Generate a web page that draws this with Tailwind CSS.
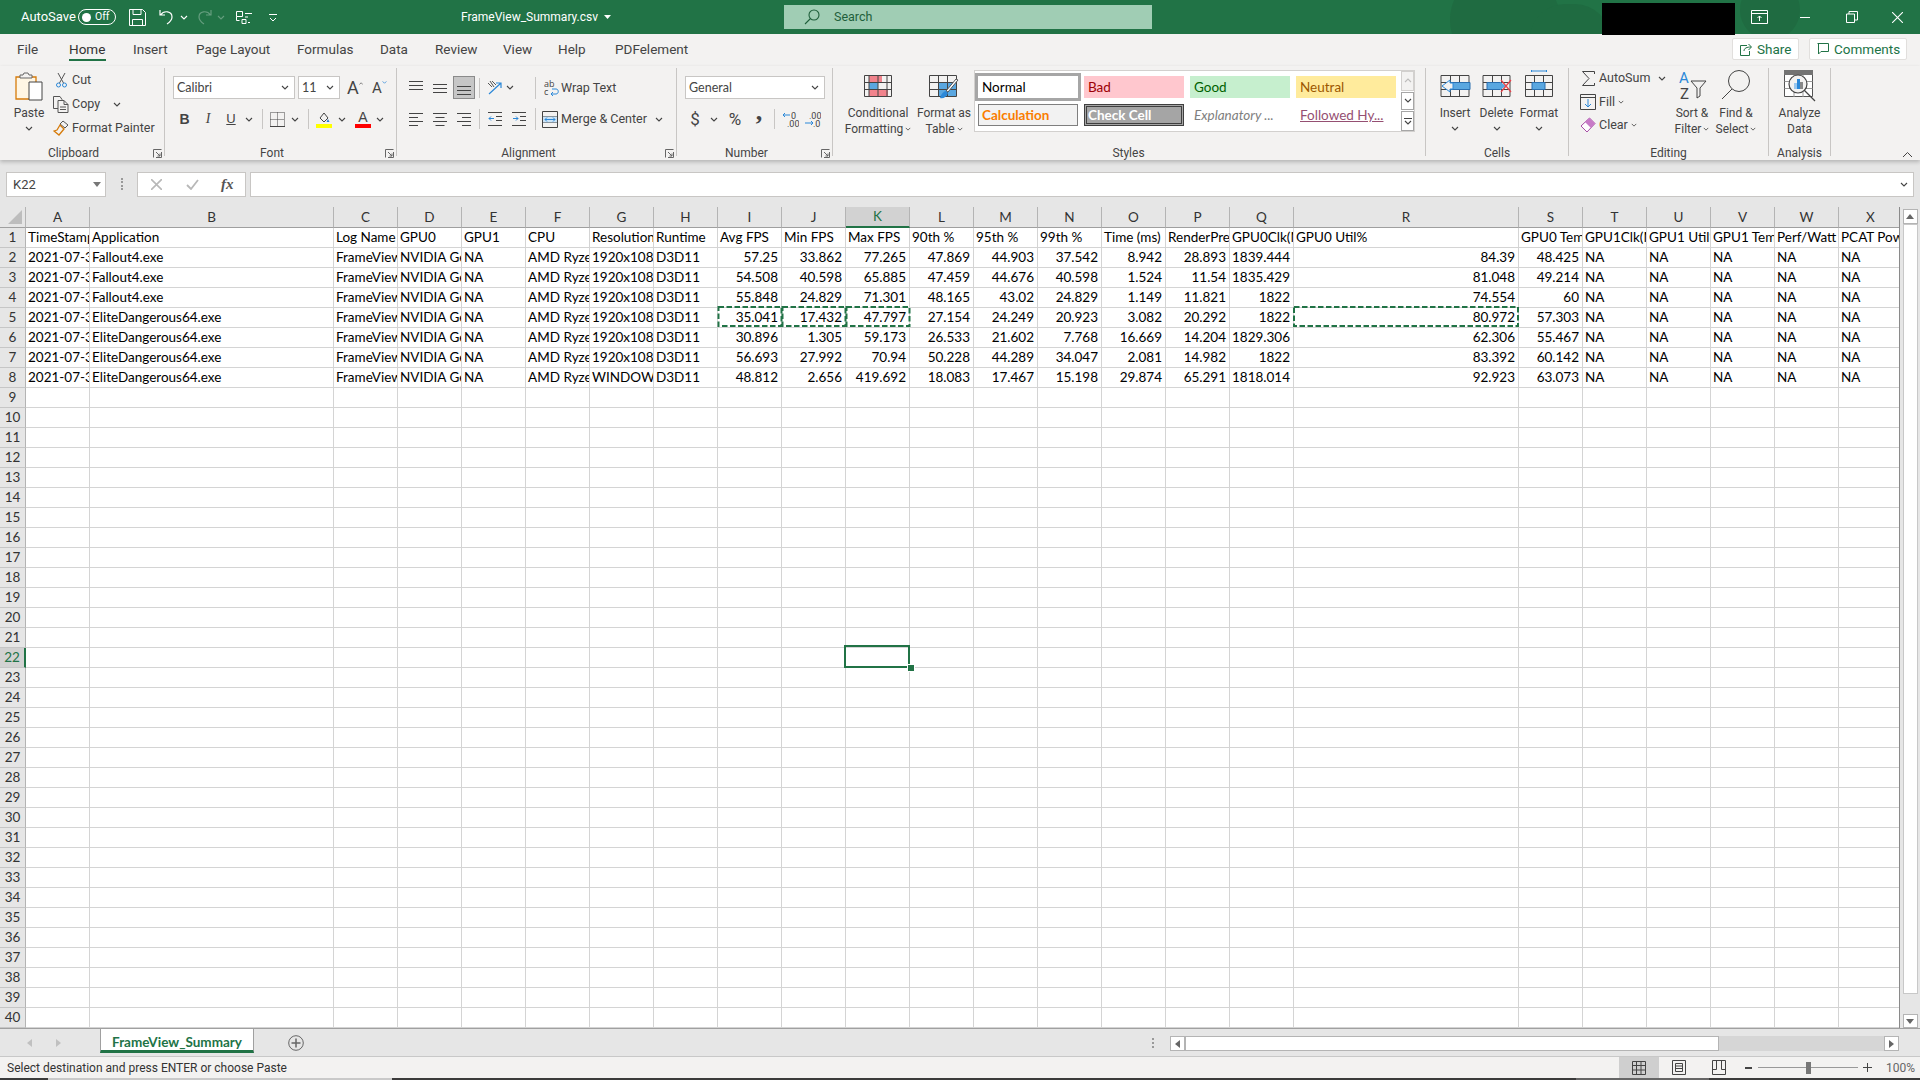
<!doctype html>
<html lang="en">
<head>
<meta charset="UTF-8" />
<title>FrameView_Summary.csv - Excel</title>
<script src="https://cdn.jsdelivr.net/npm/@tailwindcss/browser@4"></script>
</head>
<body class="overflow-hidden">
<svg class="hidden"><symbol id="chev" viewBox="0 0 8 5"><path d="M1 1l3 3 3-3" fill="none" stroke="#444" stroke-width="1.1"/></symbol>
<symbol id="chevw" viewBox="0 0 8 5"><path d="M1 1l3 3 3-3" fill="none" stroke="#fff" stroke-width="1.1"/></symbol>
<symbol id="launch" viewBox="0 0 9 9"><path d="M.5 8.500V.5h8M8.500 3v5.500H3M3 3l4 4M7 4.500V7H4.500" fill="none" stroke="#666"/></symbol></svg>

<div class="w-[1920px] h-[1080px] flex flex-col relative overflow-hidden bg-[#f3f2f1] text-[#444] text-[12.5px] [font-family:Roboto,sans-serif]">

  <!-- title bar -->
  <div class="h-[34px] shrink-0 bg-[#217346] text-white flex items-center pl-[21px] pr-[17px] relative overflow-hidden text-[13px]">
    <div class="absolute left-[1450px] -top-[30px] w-[110px] h-[100px] rounded-full bg-[#1f6b41]"></div>
    <div class="absolute left-[1530px] top-[4px] w-[80px] h-[70px] rounded-full bg-[#1f6b41]"></div>
    <div class="absolute left-[1740px] -top-[20px] w-[60px] h-[60px] rounded-full bg-[#1f6b41]"></div>
    <div class="w-[57px] relative">AutoSave</div>
    <div class="w-[38px] h-[16px] rounded-full border border-white flex items-center pl-[3px] gap-[4px]"><div class="w-[9px] h-[9px] rounded-full bg-white"></div><span class="text-[10.5px] leading-none">Off</span></div>
    <svg class="ml-[13px] w-[17px] h-[17px]" viewBox="0 0 17 17" fill="none" stroke="#fff"><path d="M.5.500h13l3 3v13H.5zM4 .5v5h8v-5M3.500 16.500v-6h10v6"/></svg>
    <svg class="ml-[13px] w-[14px] h-[16px]" viewBox="0 0 14 16" fill="none" stroke="#fff" stroke-width="1.2"><path d="M1 1v5h5M1.500 6C5 1 13 2 13 8c0 3-2 5-5 7"/></svg>
    <svg class="ml-[7px] w-[8px] h-[5px]"><use href="#chevw"/></svg>
    <svg class="ml-[10px] w-[14px] h-[16px] opacity-30" viewBox="0 0 14 16" fill="none" stroke="#fff" stroke-width="1.2"><path d="M13 1v5H8M12.500 6C9 1 1 2 1 8c0 3 2 5 5 7"/></svg>
    <svg class="ml-[5px] w-[8px] h-[5px] opacity-30"><use href="#chevw"/></svg>
    <svg class="ml-[11px] w-[16px] h-[14px]" viewBox="0 0 16 14" fill="none" stroke="#fff"><path d="M.5 1.500h6v5h-6zM.5 6.500v4h3M9 3.500h7M9 7h3M6 9.500h4v4H6zM12 12.500h2"/></svg>
    <svg class="ml-[17px] w-[8px] h-[9px]" viewBox="0 0 8 9" fill="none" stroke="#fff"><path d="M0 1.500h8M1 5l3 3 3-3"/></svg>
    <div class="ml-[184px] w-[143px] whitespace-nowrap relative text-[12px]">FrameView_Summary.csv</div>
    <svg class="w-[7px] h-[4px]" viewBox="0 0 7 4"><path d="M0 0h7L3.500 4z" fill="#fff"/></svg>
    <div class="ml-[173px] w-[368px] h-[24px] bg-[#a0cdb4] flex items-center text-[#1f5f3b] text-[12.5px]">
      <svg class="ml-[20px] w-[16px] h-[16px]" viewBox="0 0 16 16" fill="none" stroke="#1f5f3b" stroke-width="1.100"><circle cx="10" cy="6" r="5"/><path d="M6.500 9.500L1 15"/></svg>
      <span class="ml-[14px]">Search</span>
    </div>
    <svg class="ml-auto relative w-[17px] h-[14px]" viewBox="0 0 17 14" fill="none" stroke="#fff"><path d="M.5.500h16v13H.5zM.5 3.500h16M8.500 11V6M6.500 8l2-2 2 2"/></svg>
    <div class="ml-[32px] w-[10px] h-px bg-white relative"></div>
    <svg class="ml-[36px] w-[12px] h-[12px] relative" viewBox="0 0 12 12" fill="none" stroke="#fff"><path d="M.5 3h8v8.500h-8zM3 3V.5h8.500V9H9"/></svg>
    <svg class="ml-[34px] w-[11px] h-[11px] relative" viewBox="0 0 11 11" stroke="#fff" stroke-width="1.100"><path d="M0 0l11 11M11 0L0 11"/></svg>
  </div>
  <div class="absolute left-[1602px] top-[3px] w-[133px] h-[32px] bg-black z-20"></div>

  <!-- ribbon tabs -->
  <div class="h-[32px] shrink-0 flex items-center pl-[17px] pb-[2px] text-[13.5px]">
    <div class="w-[52px]">File</div>
    <div class="w-[64px]"><span class="inline-block w-[37px] border-b-[2px] border-[#217346] leading-[20px] translate-y-[1px] text-[#333]">Home</span></div>
    <div class="w-[63px]">Insert</div>
    <div class="w-[101px]">Page Layout</div>
    <div class="w-[83px]">Formulas</div>
    <div class="w-[55px]">Data</div>
    <div class="w-[68px]">Review</div>
    <div class="w-[55px]">View</div>
    <div class="w-[57px]">Help</div>
    <div>PDFelement</div>
    <div class="ml-auto mr-[13px] flex gap-[10px] self-start mt-[4px] text-[#217346]">
      <div class="w-[67px] h-[22px] bg-white border border-[#e1dfdd] rounded-[2px] flex items-center pl-[7px] gap-[5px]"><svg class="w-[12px] h-[13px]" viewBox="0 0 12 13" fill="none" stroke="#217346"><path d="M7 2.500H.5v10h9V8M4 8c0-3 3-4 7-4M8.500 1l3 3-3 3"/></svg>Share</div>
      <div class="w-[98px] h-[22px] bg-white border border-[#e1dfdd] rounded-[2px] flex items-center pl-[7px] gap-[5px]"><svg class="w-[12px] h-[12px]" viewBox="0 0 12 12" fill="none" stroke="#217346"><path d="M.5.500h11v8H4L1.500 11V.5"/></svg>Comments</div>
    </div>
  </div>

  <!-- ribbon -->
  <div class="h-[94px] shrink-0 pt-[2px] flex relative z-10 shadow-[0_2px_4px_rgba(0,0,0,0.22)] text-[12px] leading-[16px]">

    <!-- clipboard -->
    <div class="w-[165px] h-[88px] border-r border-[#c8c6c4] flex flex-col justify-between">
      <div class="flex">
        <div class="ml-[5px] w-[48px] flex flex-col items-center">
          <svg class="mt-[4px] w-[28px] h-[30px]" viewBox="0 0 28 30" fill="none"><path d="M1 5h20v22H1z" stroke="#d67b0a" stroke-width="1.300" fill="#fff6e4"/><path d="M5 6V3h3l1-2h4l1 2h3v3z" fill="#f3f2f1" stroke="#666"/><path d="M14 10h13v18H14z" fill="#fff" stroke="#444"/></svg>
          <div class="mt-[3px]">Paste</div>
          <svg class="mt-[5px] w-[8px] h-[5px]"><use href="#chev"/></svg>
        </div>
        <div class="text-[12.5px]">
          <div class="h-[24px] flex items-center"><div class="w-[19px] pl-[3px]"><svg class="w-[11px] h-[16px]" viewBox="0 0 11 16" fill="none" stroke="#555"><path d="M2 1l5.500 10M9 1L3.500 11"/><circle cx="2.500" cy="13" r="2" stroke="#2b88d8"/><circle cx="8.500" cy="13" r="2" stroke="#2b88d8"/></svg></div>Cut</div>
          <div class="h-[24px] flex items-center"><div class="w-[19px]"><svg class="w-[16px] h-[17px]" viewBox="0 0 16 17" fill="none" stroke="#555"><path d="M.5.500H7l2 3v9H.5z"/><path d="M5 4.500h6l4 4v8H5zM11 4.500v4h4M7 11h6M7 13.500h6" fill="#f3f2f1"/></svg></div>Copy<svg class="ml-[13px] w-[8px] h-[5px]"><use href="#chev"/></svg></div>
          <div class="h-[24px] flex items-center"><div class="w-[19px]"><svg class="w-[16px] h-[16px]" viewBox="0 0 16 16" fill="none"><path d="M10 1l5 4-3 3-5-4z" stroke="#555"/><path d="M7 5l4 4-5 6-5-4 3-1z" stroke="#d67b0a" stroke-width="1.300"/></svg></div>Format Painter</div>
        </div>
      </div>
      <div class="flex items-center -mb-[5px]"><div class="w-[147px] text-center">Clipboard</div><svg class="ml-[6px] w-[9px] h-[9px]"><use href="#launch"/></svg></div>
    </div>

    <!-- font -->
    <div class="w-[232px] h-[88px] border-r border-[#c8c6c4] flex flex-col justify-between">
      <div class="pl-[8px] pt-[8px]">
        <div class="flex items-center h-[23px]">
          <div class="w-[122px] h-[23px] bg-white border border-[#c8c6c4] flex items-center justify-between px-[3px] [font-family:Lato,sans-serif] text-[12.5px]">Calibri<svg class="w-[8px] h-[5px] mr-[2px]"><use href="#chev"/></svg></div>
          <div class="ml-[3px] w-[42px] h-[23px] bg-white border border-[#c8c6c4] flex items-center justify-between px-[3px] [font-family:Lato,sans-serif] text-[12.5px]">11<svg class="w-[8px] h-[5px] mr-[2px]"><use href="#chev"/></svg></div>
          <div class="ml-[7px] w-[16px] flex items-start text-[18px] leading-[20px]">A<svg class="w-[5px] h-[3px] mt-[4px]" viewBox="0 0 6 4"><path d="M.5 3.500L3 1l2.500 2.500" fill="none" stroke="#555"/></svg></div>
          <div class="ml-[9px] w-[15px] flex items-start text-[15px] leading-[20px]">A<svg class="w-[5px] h-[3px] mt-[3px]" viewBox="0 0 6 4"><path d="M.5.500L3 3 5.500.5" fill="none" stroke="#2b88d8"/></svg></div>
        </div>
        <div class="flex items-center h-[24px] mt-[8px] text-[14px]">
          <div class="w-[23px] text-center font-bold [font-family:'Liberation_Sans',sans-serif]">B</div>
          <div class="w-[24px] text-center italic [font-family:'Liberation_Serif',serif]">I</div>
          <div class="w-[22px] text-center underline [font-family:'Liberation_Sans',sans-serif] text-[13px]">U</div>
          <div class="w-[14px] flex justify-center"><svg class="w-[8px] h-[5px]"><use href="#chev"/></svg></div>
          <div class="w-[12px] flex justify-center"><div class="w-px h-[20px] bg-[#c8c6c4]"></div></div>
          <div class="w-[18px] flex justify-center"><svg class="w-[15px] h-[15px]" viewBox="0 0 15 15" fill="none" stroke="#444" stroke-dasharray="1 1"><path d="M.5.500h14v14H.5zM.5 7.500h14M7.500.5v14"/><path d="M0 14.500h15" stroke-dasharray="none"/></svg></div>
          <div class="w-[18px] flex justify-center"><svg class="w-[8px] h-[5px]"><use href="#chev"/></svg></div>
          <div class="w-[8px] flex justify-center"><div class="w-px h-[20px] bg-[#c8c6c4]"></div></div>
          <div class="w-[24px] flex justify-center"><svg class="w-[16px] h-[17px]" viewBox="0 0 16 17"><path d="M4 7l4-5 4 5-4 4z" fill="none" stroke="#444"/><path d="M12 8l1.500 3h-3z" fill="#2b7cd3"/><path d="M0 13h16v4H0z" fill="#ff0"/></svg></div>
          <div class="w-[11px] flex justify-center"><svg class="w-[8px] h-[5px]"><use href="#chev"/></svg></div>
          <div class="ml-[5px] w-[22px] flex flex-col items-center leading-[14px] text-[#444] [font-family:'Liberation_Sans',sans-serif]">A<div class="w-[16px] h-[4px] bg-[#f00]"></div></div>
          <div class="w-[12px] flex justify-center"><svg class="w-[8px] h-[5px]"><use href="#chev"/></svg></div>
        </div>
      </div>
      <div class="flex items-center -mb-[5px]"><div class="w-[214px] text-center">Font</div><svg class="ml-[6px] w-[9px] h-[9px]"><use href="#launch"/></svg></div>
    </div>

    <!-- alignment -->
    <div class="w-[280px] h-[88px] border-r border-[#c8c6c4] flex flex-col justify-between">
      <div class="pl-[8px] pt-[8px]">
        <div class="flex items-center h-[23px]">
          <div class="w-[22px] flex justify-center"><svg class="w-[14px] h-[14px]" viewBox="0 0 14 14" stroke="#444"><path d="M0 .5h14M0 4.500h14M0 8.500h14"/></svg></div>
          <div class="w-[26px] flex justify-center"><svg class="w-[14px] h-[14px]" viewBox="0 0 14 14" stroke="#444"><path d="M0 3.500h14M0 7.500h14M0 11.500h14"/></svg></div>
          <div class="w-[22px] h-[23px] bg-[#c6c6c6] border border-[#8a8a8a] flex items-center justify-center"><svg class="w-[14px] h-[14px]" viewBox="0 0 14 14" stroke="#444"><path d="M0 5.500h14M0 9.500h14M0 13.500h14"/></svg></div>
          <div class="w-[9px] flex justify-center"><div class="w-px h-[20px] bg-[#c8c6c4]"></div></div>
          <div class="w-[22px] flex justify-center"><svg class="w-[16px] h-[15px]" viewBox="0 0 16 15" fill="none"><path d="M1 3l4 4M3 1L7 7M5 1l4 4" stroke="#555"/><path d="M2 14L14 3M9 3h5v5" stroke="#2b88d8" stroke-width="1.200"/></svg></div>
          <div class="w-[8px] flex justify-center"><svg class="w-[8px] h-[5px]"><use href="#chev"/></svg></div>
          <div class="ml-[16px] w-[10px] flex justify-center"><div class="w-px h-[22px] bg-[#c8c6c4]"></div></div>
          <svg class="ml-[4px] w-[15px] h-[17px]" viewBox="0 0 15 17" fill="none"><text x="0" y="8" font-size="9" fill="#444" font-family="Open Sans">ab</text><text x="0" y="16" font-size="9" fill="#444" font-family="Open Sans">c</text><path d="M7 15h5c3 0 3-5 0-5H8M9 13l-2 2 2 2" stroke="#2b88d8"/></svg>
          <div class="ml-[2px] text-[12.5px]">Wrap Text</div>
        </div>
        <div class="flex items-center h-[24px] mt-[8px]">
          <div class="w-[22px] flex justify-center"><svg class="w-[14px] h-[14px]" viewBox="0 0 14 14" stroke="#444"><path d="M0 1.500h14M0 5.500h9M0 9.500h14M0 13.500h9"/></svg></div>
          <div class="w-[26px] flex justify-center"><svg class="w-[14px] h-[14px]" viewBox="0 0 14 14" stroke="#444"><path d="M0 1.500h14M2.500 5.500h9M0 9.500h14M2.500 13.500h9"/></svg></div>
          <div class="w-[22px] flex justify-center"><svg class="w-[14px] h-[14px]" viewBox="0 0 14 14" stroke="#444"><path d="M0 1.500h14M5 5.500h9M0 9.500h14M5 13.500h9"/></svg></div>
          <div class="w-[9px] flex justify-center"><div class="w-px h-[20px] bg-[#c8c6c4]"></div></div>
          <div class="w-[22px] flex justify-center"><svg class="w-[14px] h-[14px]" viewBox="0 0 14 14" fill="none" stroke="#444"><path d="M0 .5h14M8 4.500h6M8 8.500h6M0 13.500h14"/><path d="M6 6.500H1M3 4.500l-2 2 2 2" stroke="#2b88d8"/></svg></div>
          <div class="w-[26px] flex justify-center"><svg class="w-[14px] h-[14px]" viewBox="0 0 14 14" fill="none" stroke="#444"><path d="M0 .5h14M8 4.500h6M8 8.500h6M0 13.500h14"/><path d="M1 6.500h5M4 4.500l2 2-2 2" stroke="#2b88d8"/></svg></div>
          <div class="w-[6px] flex justify-center"><div class="w-px h-[22px] bg-[#c8c6c4]"></div></div>
          <svg class="ml-[4px] w-[16px] h-[17px]" viewBox="0 0 16 17" fill="none"><path d="M.5.500h15v16H.5z" stroke="#444"/><path d="M.5 5.500h15M.5 11.500h15" stroke="#444"/><path d="M1 5.500h14v6H1z" fill="#cce4f7"/><path d="M3 8.500h10M5 6.500l-2 2 2 2M11 6.500l2 2-2 2" stroke="#2b88d8"/></svg>
          <div class="ml-[3px] w-[92px] text-[12.5px] whitespace-nowrap">Merge &amp; Center</div>
          <div class="w-[12px] flex justify-center"><svg class="w-[8px] h-[5px]"><use href="#chev"/></svg></div>
        </div>
      </div>
      <div class="flex items-center -mb-[5px]"><div class="w-[263px] text-center">Alignment</div><svg class="ml-[5px] w-[9px] h-[9px]"><use href="#launch"/></svg></div>
    </div>

    <!-- number -->
    <div class="w-[156px] h-[88px] border-r border-[#c8c6c4] flex flex-col justify-between">
      <div class="pl-[8px] pt-[8px]">
        <div class="w-[140px] h-[23px] bg-white border border-[#c8c6c4] flex items-center justify-between px-[3px] [font-family:Lato,sans-serif] text-[12.5px]">General<svg class="w-[8px] h-[5px] mr-[2px]"><use href="#chev"/></svg></div>
        <div class="flex items-center h-[24px] mt-[8px]">
          <div class="w-[20px] text-center text-[17px]">$</div>
          <div class="w-[17px] flex justify-center"><svg class="w-[8px] h-[5px]"><use href="#chev"/></svg></div>
          <div class="w-[26px] text-center text-[17px]">%</div>
          <div class="w-[22px] text-center text-[26px] leading-[24px] font-bold -translate-y-[7px] [font-family:'Liberation_Serif',serif]">,</div>
          <div class="w-[9px] flex justify-center"><div class="w-px h-[20px] bg-[#c8c6c4]"></div></div>
          <div class="w-[22px] flex justify-center"><svg class="w-[17px] h-[16px]" viewBox="0 0 17 16" fill="none"><path d="M8 4H1M3 2L1 4l2 2" stroke="#2b88d8"/><text x="9" y="7.500" font-size="9" fill="#444" font-family="Roboto">0</text><text x="5" y="15.500" font-size="9" fill="#444" font-family="Roboto">.00</text></svg></div>
          <div class="w-[22px] flex justify-center"><svg class="w-[17px] h-[16px]" viewBox="0 0 17 16" fill="none"><text x="5" y="7.500" font-size="9" fill="#444" font-family="Roboto">.00</text><path d="M1 12h8M7 10l2 2-2 2" stroke="#2b88d8"/><text x="9" y="15.500" font-size="9" fill="#444" font-family="Roboto">.0</text></svg></div>
        </div>
      </div>
      <div class="flex items-center -mb-[5px]"><div class="w-[139px] text-center">Number</div><svg class="ml-[5px] w-[9px] h-[9px]"><use href="#launch"/></svg></div>
    </div>

    <!-- styles -->
    <div class="w-[593px] h-[88px] border-r border-[#c8c6c4] flex flex-col justify-between">
      <div class="flex">
        <div class="ml-[15px] w-[60px] flex flex-col items-center text-center">
          <svg class="mt-[7px] w-[28px] h-[22px]" viewBox="0 0 28 22" fill="none"><path d="M5 1h13v7H5zM5 15h19v6H5z" fill="#f1838c"/><path d="M5 8h9v7H5z" fill="#5aa7e0"/><path d="M.5.500h27v21H.5zM.5 7.500h27M.5 14.500h27M5 0v22M14 0v22M23 0v22" stroke="#444"/></svg>
          <div class="mt-[8px] whitespace-nowrap">Conditional</div>
          <div class="flex items-center gap-[2px]">Formatting<svg class="w-[6px] h-[4px]"><use href="#chev"/></svg></div>
        </div>
        <div class="ml-[6px] w-[60px] flex flex-col items-center text-center">
          <svg class="mt-[7px] w-[30px] h-[25px] -mb-[3px]" viewBox="0 0 30 25" fill="none"><path d="M10 7h17v14H10z" fill="#5aa7e0"/><path d="M.5.500h27v21H.5zM.5 7.500h27M.5 14.500h27M9.500 0v22M18.500 0v22" stroke="#444"/><path d="M29 5L19 17l-2-1L27 4z" fill="#fff" stroke="#555"/><path d="M17 16c-2 0-5 3-6 7 3 1 7-1 8-5z" fill="#2b88d8"/></svg>
          <div class="mt-[8px] whitespace-nowrap">Format as</div>
          <div class="flex items-center gap-[2px]">Table<svg class="w-[6px] h-[4px]"><use href="#chev"/></svg></div>
        </div>
        <div class="mt-[2px] w-[441px] h-[62px] bg-white border border-[#d2d0ce] flex pl-[3px] pt-[5px] [font-family:Lato,sans-serif] text-[13.5px] leading-[22px]">
          <div class="grid grid-cols-[100px_100px_100px_100px] grid-rows-[22px_22px] gap-[6px]">
            <div class="bg-white outline-[3px] outline-[#a6a6a6] text-black pl-[4px]">Normal</div>
            <div class="bg-[#ffc7ce] text-[#9c0006] pl-[4px]">Bad</div>
            <div class="bg-[#c6efce] text-[#006100] pl-[4px]">Good</div>
            <div class="bg-[#ffeb9c] text-[#9c5700] pl-[4px]">Neutral</div>
            <div class="bg-[#f2f2f2] border border-[#7f7f7f] text-[#fa7d00] font-bold pl-[3px] leading-[20px]">Calculation</div>
            <div class="bg-[#a5a5a5] border-[3px] border-double border-[#3f3f3f] text-white font-bold pl-[1px] leading-[16px]">Check Cell</div>
            <div class="italic text-[#7f7f7f] pl-[4px]">Explanatory ...</div>
            <div class="text-[#954f72] underline pl-[4px]">Followed Hy...</div>
          </div>
          <div class="ml-[5px] -mt-[5px] w-[14px] flex flex-col gap-[1px]">
            <div class="h-[20px] bg-[#f3f2f1] border border-[#d2d0ce] flex items-center justify-center"><svg class="w-[8px] h-[5px] rotate-180 opacity-30"><use href="#chev"/></svg></div>
            <div class="h-[19px] bg-white border border-[#a6a6a6] flex items-center justify-center"><svg class="w-[8px] h-[5px]"><use href="#chev"/></svg></div>
            <div class="h-[20px] bg-white border border-[#a6a6a6] flex flex-col items-center justify-center gap-[1px]"><div class="w-[8px] h-px bg-[#444]"></div><svg class="w-[8px] h-[5px]"><use href="#chev"/></svg></div>
          </div>
        </div>
      </div>
      <div class="-mb-[5px] w-[591px] text-center">Styles</div>
    </div>

    <!-- cells -->
    <div class="w-[143px] h-[88px] border-r border-[#c8c6c4] flex flex-col justify-between">
      <div class="flex pl-[8px]">
        <div class="w-[42px] flex flex-col items-center">
          <svg class="mt-[2px] w-[32px] h-[28px]" viewBox="0 0 32 28" fill="none"><path d="M2 5.500h28v21H2zM2 12.500h28M2 19.500h28M11.500 5v22M20.500 5v22" stroke="#444"/><path d="M12 12.500h19v7H12z" fill="#5aa7e0" stroke="#2b6fb0"/><path d="M11 10l-8 6 8 6v-3h3v-6h-3z" fill="#f3f2f1" stroke="#2b88d8"/></svg>
          <div class="mt-[7px]">Insert</div>
          <svg class="mt-[5px] w-[8px] h-[5px]"><use href="#chev"/></svg>
        </div>
        <div class="w-[41px] flex flex-col items-center">
          <svg class="mt-[2px] w-[30px] h-[28px]" viewBox="0 0 30 28" fill="none"><path d="M1 5.500h27v21H1zM1 12.500h27M1 19.500h27M10.500 5v22M19.500 5v22" stroke="#444"/><path d="M5 12.500h14v7H5z" fill="#5aa7e0" stroke="#2b6fb0"/><path d="M18 12l6 4-6 4z" fill="#5aa7e0"/><path d="M19 10l10 12M29 10L19 22" stroke="#e8434b" stroke-width="1.200"/></svg>
          <div class="mt-[7px]">Delete</div>
          <svg class="mt-[5px] w-[8px] h-[5px]"><use href="#chev"/></svg>
        </div>
        <div class="w-[44px] flex flex-col items-center">
          <svg class="mt-[2px] w-[28px] h-[28px]" viewBox="0 0 28 28" fill="none"><path d="M6.500 1h15M6.500 0v2M21.500 0v2" stroke="#2b88d8"/><path d="M.5 5.500h27v21H.5zM.5 12.500h27M.5 19.500h27M9.500 5v22M18.500 5v22" stroke="#444"/><path d="M7 12.500h13v7H7z" fill="#5aa7e0" stroke="#2b6fb0"/></svg>
          <div class="mt-[7px]">Format</div>
          <svg class="mt-[5px] w-[8px] h-[5px]"><use href="#chev"/></svg>
        </div>
      </div>
      <div class="-mb-[5px] w-[142px] text-center">Cells</div>
    </div>

    <!-- editing -->
    <div class="w-[200px] h-[88px] border-r border-[#c8c6c4] flex flex-col justify-between">
      <div class="flex pl-[11px]">
        <div class="w-[87px] text-[12.5px]">
          <div class="h-[20px] flex items-center"><div class="w-[19px] pl-[2px]"><svg class="w-[13px] h-[15px]" viewBox="0 0 13 15" fill="none" stroke="#444"><path d="M12.500 3V.5H.5L7 7.500.5 14.500h12V12"/></svg></div><div class="w-[58px]">AutoSum</div><div class="w-[10px] flex justify-center"><svg class="w-[8px] h-[5px]"><use href="#chev"/></svg></div></div>
          <div class="h-[20px] mt-[4px] flex items-center"><div class="w-[19px]"><svg class="w-[16px] h-[16px]" viewBox="0 0 16 16" fill="none"><path d="M.5.500h15v15H.5zM.5 3.500h15" stroke="#444"/><path d="M8 5v8M5 10l3 3 3-3" stroke="#2b88d8"/></svg></div>Fill<svg class="ml-[3px] w-[6px] h-[4px]"><use href="#chev"/></svg></div>
          <div class="h-[20px] mt-[3px] flex items-center"><div class="w-[19px]"><svg class="w-[16px] h-[16px]" viewBox="0 0 16 16" fill="none"><path d="M9.500 1L15 6.500 7 15 1 9z" fill="#fff" stroke="#a64ca6"/><path d="M5 5l6 6 4-4.500L9.500 1z" fill="#c77ac7"/></svg></div>Clear<svg class="ml-[3px] w-[6px] h-[4px]"><use href="#chev"/></svg></div>
        </div>
        <div class="ml-[3px] w-[44px] flex flex-col items-center text-center">
          <svg class="mt-[2px] w-[29px] h-[30px]" viewBox="0 0 29 30"><text x="1" y="13" font-size="15" fill="#2b88d8" font-family="Roboto">A</text><text x="2" y="29" font-size="15" fill="#444" font-family="Roboto">Z</text><path d="M13 11h15l-6 7v8l-3 2V18z" fill="none" stroke="#444"/></svg>
          <div class="mt-[5px] whitespace-nowrap">Sort &amp;</div>
          <div class="flex items-center gap-[2px]">Filter<svg class="w-[6px] h-[4px]"><use href="#chev"/></svg></div>
        </div>
        <div class="w-[44px] flex flex-col items-center text-center">
          <svg class="mt-[2px] w-[30px] h-[30px]" viewBox="0 0 30 30" fill="none" stroke="#444"><circle cx="18" cy="11" r="10.500"/><path d="M11 19L1 29"/></svg>
          <div class="mt-[5px] whitespace-nowrap">Find &amp;</div>
          <div class="flex items-center gap-[2px]">Select<svg class="w-[6px] h-[4px]"><use href="#chev"/></svg></div>
        </div>
      </div>
      <div class="-mb-[5px] w-[199px] text-center">Editing</div>
    </div>

    <!-- analysis -->
    <div class="w-[62px] h-[88px] border-r border-[#c8c6c4] flex flex-col justify-between">
      <div class="flex flex-col items-center w-[61px] text-center">
        <svg class="mt-[2px] w-[32px] h-[32px]" viewBox="0 0 32 32" fill="none"><path d="M.5.500h28v26H.5z" stroke="#555" fill="#fff"/><path d="M0 0h29v5H0z" fill="#737373"/><path d="M.5 11.500h28M.5 18.500h28M10 5v22M19 5v22" stroke="#999"/><circle cx="14" cy="14" r="9" fill="#f3f2f1" stroke="#444" stroke-width="1.200"/><path d="M10 13h3v6h-3z" fill="#9ac7ee"/><path d="M13 9h3v10h-3z" fill="#2b88d8"/><path d="M16 12h3v7h-3z" fill="#888"/><path d="M20 20l11 11" stroke="#444" stroke-width="1.300"/></svg>
        <div class="mt-[3px]">Analyze</div>
        <div>Data</div>
      </div>
      <div class="-mb-[5px] w-[61px] text-center">Analysis</div>
    </div>
    <svg class="ml-[71px] mt-[83px] w-[11px] h-[7px]" viewBox="0 0 11 7"><path d="M1 6l4.500-4.500L10 6" fill="none" stroke="#444"/></svg>
  </div>

  <!-- formula bar -->
  <div class="h-[47px] shrink-0 bg-[#e6e6e6] flex items-start pt-[12px]">
    <div class="ml-[6px] w-[100px] h-[25px] bg-white border border-[#c8c6c4] flex items-center justify-between pl-[6px] pr-[4px] text-[13px]">K22<svg class="w-[8px] h-[5px]" viewBox="0 0 8 5"><path d="M0 0h8L4 5z" fill="#777"/></svg></div>
    <div class="ml-[15px] w-[2px] h-[12px] mt-[6px] border-l-2 border-dotted border-[#999]"></div>
    <div class="ml-[14px] w-[109px] h-[25px] bg-white border border-[#c8c6c4] flex items-center">
      <svg class="ml-[13px] w-[11px] h-[11px]" viewBox="0 0 11 11" stroke="#b8b8b8" stroke-width="1.600"><path d="M0 0l11 11M11 0L0 11"/></svg>
      <svg class="ml-[24px] w-[13px] h-[11px]" viewBox="0 0 13 11" fill="none" stroke="#b8b8b8" stroke-width="1.800"><path d="M1 6l4 4 7-9"/></svg>
      <span class="ml-[22px] italic font-semibold text-[15px] text-[#555] [font-family:'Liberation_Serif',serif]">fx</span>
    </div>
    <div class="ml-[4px] w-[1664px] h-[25px] bg-white border border-[#c8c6c4] flex items-center justify-end pr-[5px]"><svg class="w-[8px] h-[5px]"><use href="#chev"/></svg></div>
  </div>

  <!-- sheet -->
  <div class="h-[822px] shrink-0 flex relative bg-white border-b border-[#a0a0a0]">
    <div class="w-[1900px] border-r border-[#8a8a8a] overflow-hidden">
      <table class="table-fixed border-separate border-spacing-0 w-[1903px] text-black text-[13.5px] leading-[19px] [font-family:Lato,sans-serif] [&_td]:h-[20px] [&_td]:border-r [&_td]:border-b [&_td]:border-[#d4d4d4] [&_td]:overflow-hidden [&_td]:whitespace-nowrap [&_td]:px-[2px] [&_th]:h-[20px] [&_th]:font-normal [&_th]:bg-[#e6e6e6] [&_th]:border-r [&_th]:border-b [&_th]:border-r-[#b4b4b4] [&_th]:border-b-[#9f9f9f] [&_th]:text-[#333]" id="grid"></table>
    </div>
    <div class="w-[20px] bg-[#e6e6e6] flex flex-col items-center pt-[2px]">
      <div class="w-[15px] h-[15px] bg-white border border-[#b4b4b4] flex items-center justify-center"><svg class="w-[8px] h-[5px]" viewBox="0 0 8 5"><path d="M0 5h8L4 0z" fill="#666"/></svg></div>
      <div class="w-[15px] h-[770px] bg-white border border-[#c8c8c8]"></div>
      <div class="w-[15px] h-[14px] mt-auto bg-white border border-[#b4b4b4] flex items-center justify-center"><svg class="w-[8px] h-[5px]" viewBox="0 0 8 5"><path d="M0 0h8L4 5z" fill="#666"/></svg></div>
    </div>

    <!-- selected cell K22 -->
    <div class="absolute left-[844px] top-[438px] w-[66px] h-[23px] border-2 border-[#217346]"></div>
    <div class="absolute left-[907px] top-[457px] w-[6px] h-[6px] bg-[#217346] border border-white box-content"></div>
    <!-- copy marquee -->
    <svg class="absolute left-0 top-0 w-[1900px] h-[130px] pointer-events-none" fill="none" stroke="#217346" stroke-width="2" stroke-dasharray="5.500 2.500"><rect x="718.500" y="100" width="63" height="19"/><rect x="782.500" y="100" width="63" height="19"/><rect x="846.500" y="100" width="63" height="19"/><rect x="1294" y="100" width="224" height="19"/></svg>
  </div>

  <!-- sheet tabs -->
  <div class="h-[28px] shrink-0 bg-[#e6e6e6] border-b border-[#c8c8c8] flex items-start">
    <svg class="ml-[27px] mt-[10px] w-[5px] h-[8px]" viewBox="0 0 5 8"><path d="M5 0v8L0 4z" fill="#c0c0c0"/></svg>
    <svg class="ml-[24px] mt-[10px] w-[5px] h-[8px]" viewBox="0 0 5 8"><path d="M0 0v8l5-4z" fill="#c0c0c0"/></svg>
    <div class="ml-[39px] w-[154px] h-[24px] bg-white border-x border-[#a0a0a0] border-b-[3px] border-b-[#217346] text-center text-[#217346] font-bold text-[13.5px] leading-[26px] [font-family:Lato,sans-serif]">FrameView_Summary</div>
    <svg class="ml-[34px] mt-[6px] w-[16px] h-[16px]" viewBox="0 0 16 16" fill="none" stroke="#666"><circle cx="8" cy="8" r="7.300"/><path d="M8 3.500v9M3.500 8h9" stroke-width="1.500"/></svg>
    <div class="ml-[848px] mt-[9px] h-[10px] w-[2px] border-l-2 border-dotted border-[#999]"></div>
    <div class="ml-[16px] mt-[7px] w-[729px] h-[15px] bg-[#d6d6d6] flex">
      <div class="w-[15px] h-[15px] bg-white border border-[#b4b4b4] flex items-center justify-center"><svg class="w-[5px] h-[8px]" viewBox="0 0 5 8"><path d="M5 0v8L0 4z" fill="#666"/></svg></div>
      <div class="w-[534px] bg-white border border-[#b4b4b4]"></div>
      <div class="ml-auto w-[15px] h-[15px] bg-white border border-[#b4b4b4] flex items-center justify-center"><svg class="w-[5px] h-[8px]" viewBox="0 0 5 8"><path d="M0 0v8l5-4z" fill="#666"/></svg></div>
    </div>
  </div>

  <!-- status bar -->
  <div class="h-[21px] shrink-0 flex items-center pl-[7px] text-[12px] text-[#333]">
    <div>Select destination and press ENTER or choose Paste</div>
    <div class="ml-auto h-full w-[40px] bg-[#cfcfcf] flex items-center justify-center"><svg class="w-[14px] h-[14px]" viewBox="0 0 14 14" fill="none" stroke="#444"><path d="M.5.500h13v13H.5zM.5 4.500h13M.5 9h13M4.500 0v14M9 0v14"/></svg></div>
    <div class="w-[40px] flex justify-center"><svg class="w-[14px] h-[15px]" viewBox="0 0 14 15" fill="none" stroke="#444"><path d="M.5.500h13v14H.5zM3.500 3.500h7v8h-7zM3.500 6h7M3.500 8.500h7"/></svg></div>
    <div class="w-[40px] flex justify-center"><svg class="w-[14px] h-[15px]" viewBox="0 0 14 15" fill="none" stroke="#444"><path d="M.5.500h13v14H.5zM.5 9.500h4M4.500.5v9M9.500.5v9h4"/></svg></div>
    <div class="ml-[6px] w-[7px] h-[2px] bg-[#444]"></div>
    <div class="ml-[6px] w-[100px] h-px bg-[#999] flex items-center justify-center"><div class="w-[5px] h-[12px] bg-[#777] shrink-0"></div></div>
    <div class="ml-[5px] w-[9px] h-[9px] relative flex items-center justify-center"><div class="w-[9px] h-px bg-[#444]"></div><div class="absolute w-px h-[9px] bg-[#444]"></div></div>
    <div class="ml-[14px] mr-[3px] w-[31px] text-[#666] whitespace-nowrap">100%</div>
  </div>
  <!-- taskbar sliver -->
  <div class="h-[2px] shrink-0 bg-[#3b3b3b] flex"><div class="ml-[48px] w-[344px] bg-[#c9c9c9]"></div><div class="ml-[1184px] w-[133px] bg-[#666]"></div></div>
</div>

<script>
  var letters = "ABCDEFGHIJKLMNOPQRSTUVWX".split("")
  var widths = { B: 244, R: 225 }
  var head = ["TimeStamp","Application","Log Name","GPU0","GPU1","CPU","Resolution","Runtime","Avg FPS","Min FPS","Max FPS","90th %","95th %","99th %","Time (ms)","RenderPresent","GPU0Clk(MHz)","GPU0 Util%","GPU0 Temp","GPU1Clk(MHz)","GPU1 Util%","GPU1 Temp","Perf/Watt","PCAT Power"]
  var nums = [
    ["Fallout4.exe","1920x1080",57.25,33.862,77.265,47.869,44.903,37.542,8.942,28.893,1839.444,84.39,48.425],
    ["Fallout4.exe","1920x1080",54.508,40.598,65.885,47.459,44.676,40.598,1.524,11.54,1835.429,81.048,49.214],
    ["Fallout4.exe","1920x1080",55.848,24.829,71.301,48.165,43.02,24.829,1.149,11.821,1822,74.554,60],
    ["EliteDangerous64.exe","1920x1080",35.041,17.432,47.797,27.154,24.249,20.923,3.082,20.292,1822,80.972,57.303],
    ["EliteDangerous64.exe","1920x1080",30.896,1.305,59.173,26.533,21.602,7.768,16.669,14.204,1829.306,62.306,55.467],
    ["EliteDangerous64.exe","1920x1080",56.693,27.992,70.94,50.228,44.289,34.047,2.081,14.982,1822,83.392,60.142],
    ["EliteDangerous64.exe","WINDOWED",48.812,2.656,419.692,18.083,17.467,15.198,29.874,65.291,1818.014,92.923,63.073]
  ]
  var cols = '<col style="width:26px">' + letters.map(function (l) { return '<col style="width:' + (widths[l] || 64) + 'px">' }).join("")
  var html = "<colgroup>" + cols + "</colgroup><tr><th class=\"align-bottom\"><svg class=\"w-[14px] h-[14px] ml-[8px] mb-[3px]\" viewBox=\"0 0 14 14\"><path d=\"M14 0v14H0z\" fill=\"#bdbdbd\"/></svg></th>"
  letters.forEach(function (l) {
    html += l == "K" ? '<th class="!bg-[#d2d2d2] !border-b-2 !border-b-[#217346] !text-[#217346]">' + l + "</th>" : "<th>" + l + "</th>"
  })
  html += "</tr>"
  for (var r = 1; r <= 41; r++) {
    var rowhead = r == 22 ? '<th class="!bg-[#d2d2d2] !border-r-2 !border-r-[#217346] !text-[#217346] !border-b-[#c6c6c6]">' : '<th class="!border-b-[#c6c6c6]">'
    html += "<tr>" + rowhead + r + "</th>"
    var row
    if (r == 1) row = head
    else if (r <= 8) {
      var d = nums[r - 2]
      row = ["2021-07-31", d[0], "FrameView", "NVIDIA GeForce", "NA", "AMD Ryzen", d[1], "D3D11"].concat(d.slice(2), ["NA", "NA", "NA", "NA", "NA", "NA"])
    } else row = []
    letters.forEach(function (l, i) {
      var v = row[i]
      html += typeof v == "number" ? '<td class="text-right !pr-[3px]">' + v + "</td>" : "<td>" + (v || "") + "</td>"
    })
    html += "</tr>"
  }
  document.getElementById("grid").innerHTML = html
</script>
</body>
</html>
